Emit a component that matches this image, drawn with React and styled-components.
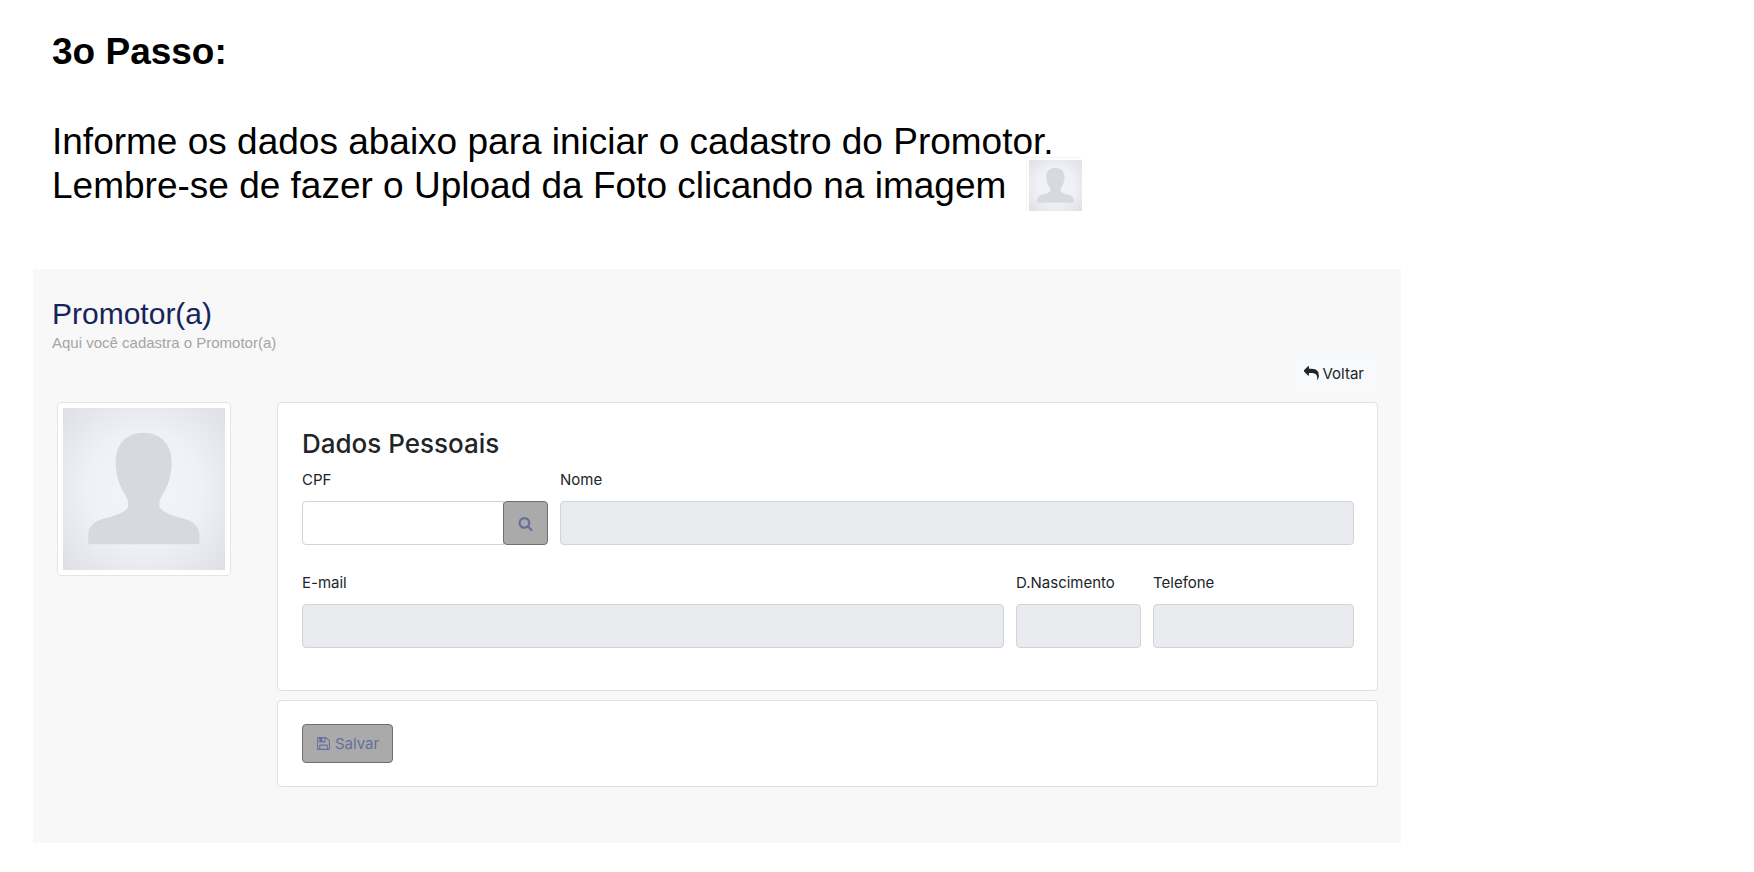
import React, { useId } from 'react';
import styled, { createGlobalStyle } from 'styled-components';

const GlobalStyle = createGlobalStyle`
  *, *::before, *::after { box-sizing: border-box; }
  body {
    margin: 0;
    background: #fff;
    color: #212529;
    font-family: Inter, "Liberation Sans", sans-serif;
    font-size: 15px;
  }
`;

const Page = styled.main`
  padding: 30px 353px 30px 33px;
`;

const Instructions = styled.section`
  padding-left: 19px;
  color: #000;
  font-family: "Liberation Sans", Arial, sans-serif;
  font-size: 37px;
  line-height: 44px;
`;

const StepTitle = styled.h1`
  margin: 0 0 46px;
  font-size: 37px;
  font-weight: 700;
`;

const Line = styled.p`
  display: flex;
  align-items: center;
  gap: 20px;
  height: 44px;
  margin: 0;
  white-space: nowrap;
`;

const InlinePhoto = styled.span`
  flex: none;
  width: 56px;
  height: 54px;
  margin-bottom: 4px;
  padding: 2px 0 0 2px;
  border: solid #f4f4f4;
  border-width: 1px 0 0 1px;
  background: #fff;
`;

const Panel = styled.section`
  margin-top: 61px;
  padding: 27px 23px 56px 19px;
  background: #f8f8f8;
`;

const PanelTitle = styled.h2`
  margin: 0;
  color: #152459;
  font: 400 30px/36px "Liberation Sans", Arial, sans-serif;
`;

const PanelSubtitle = styled.p`
  margin: 1px 0 0;
  color: #a6a4a4;
  font: 400 15px/20px "Liberation Sans", Arial, sans-serif;
`;

const Toolbar = styled.div`
  display: flex;
  justify-content: flex-end;
  margin-top: 1px;
`;

const Button = styled.button`
  display: inline-flex;
  align-items: center;
  justify-content: center;
  gap: 4px;
  height: 39px;
  padding: 0 13px;
  border: 1px solid ${(p) => (p.$muted ? '#6f6f6f' : '#f8f9fa')};
  border-radius: 4px;
  background: ${(p) => (p.$muted ? '#aaaaaa' : '#f8f9fa')};
  color: ${(p) => (p.$muted ? '#66709a' : '#212529')};
  font: inherit;
`;

const Columns = styled.div`
  display: grid;
  grid-template-columns: 174px minmax(0, 1fr);
  align-items: start;
  gap: 46px;
  margin-top: 9px;
  padding-left: 5px;
`;

const PhotoButton = styled.button`
  display: block;
  width: 174px;
  height: 174px;
  padding: 5px;
  border: 1px solid #e3e5e7;
  border-radius: 4px;
  background: #fff;
`;

const Form = styled.form`
  display: grid;
  gap: 9px;
`;

const Card = styled.div`
  padding: 23px 23px 23px 24px;
  border: 1px solid #e0e1e2;
  border-radius: 4px;
  background: #fff;
`;

const CardTitle = styled.h3`
  margin: 0 0 6px;
  font-size: 26px;
  font-weight: 500;
  line-height: 36px;
`;

const Row = styled.div`
  display: grid;
  grid-template-columns: ${(p) => p.$columns};
  gap: 12px;
  margin-bottom: ${(p) => p.$space}px;
`;

const Field = styled.div`
  display: flex;
  flex-direction: column;
  min-width: 0;
`;

const Label = styled.label`
  margin-bottom: 9px;
  font-size: 15px;
  line-height: 24px;
`;

const Input = styled.input`
  width: 100%;
  min-width: 0;
  height: 44px;
  flex: ${(p) => (p.$grouped ? '1' : 'none')};
  padding: 0 12px;
  border: 1px solid #ced4da;
  border-radius: ${(p) => (p.$grouped ? '4px 0 0 4px' : '4px')};
  background: #fff;
  color: inherit;
  font: inherit;

  &:disabled { background: #e9ebef; }
`;

const InputGroup = styled.div`
  display: flex;
`;

const SearchButton = styled(Button)`
  width: 45px;
  height: 44px;
  margin-left: -1px;
  padding: 0;
`;

const Glyph = styled.svg`
  flex: none;
  width: 15px;
  height: 15px;
  fill: currentColor;
`;

const Picture = styled.svg`
  display: block;
  width: 100%;
  height: 100%;
`;

function Avatar() {
  const id = useId();
  return (
    <Picture viewBox="0 0 489 489" preserveAspectRatio="none" aria-hidden="true">
      <defs>
        <radialGradient id={id} cx="50%" cy="50%" r="70%">
          <stop offset="0" stopColor="#f2f5fb" />
          <stop offset="0.5" stopColor="#eff1f7" />
          <stop offset="1" stopColor="#dfe0e6" />
        </radialGradient>
      </defs>
      <rect width="489" height="489" fill={`url(#${id})`} />
      <path
        fill="#d8d9de"
        d="M243 75C190 75 159 111 159 165C159 208 173 238 188 262C196 275 199 288 196 300C189 314 158 326 122 334C91 342 76 360 76 386V411H412V386C412 360 396 342 366 334C330 326 299 314 292 300C289 288 292 275 300 262C315 238 328 208 328 165C328 111 296 75 243 75Z"
      />
    </Picture>
  );
}

const glyphs = {
  reply:
    'M1792 1120q0 166-127 451-3 7-10.500 24t-13.500 30-13 22q-12 17-28 17-15 0-23.500-10t-8.500-25q0-9 2.500-26.500t2.500-23.500q5-68 5-123 0-112-19.500-200.500t-54-153.500-89.500-112-115.500-79-142.500-47.500-160.500-22.500-179-6h-224v256q0 26-19 45t-45 19-45-19l-512-512q-19-19-19-45t19-45l512-512q19-19 45-19t45 19 19 45v256h224q713 0 875 403 53 134 53 333z',
  search:
    'M1216 832q0-185-131.500-316.500t-316.500-131.500-316.500 131.500-131.500 316.500 131.500 316.500 316.500 131.500 316.500-131.500 131.500-316.500zm512 832q0 52-38 90t-90 38q-54 0-90-38l-343-342q-179 124-399 124-143 0-273.500-55.500t-225-150-150-225-55.500-273.500 55.500-273.500 150-225 225-150 273.500-55.500 273.500 55.500 225 150 150 225 55.500 273.500q0 220-124 399l343 343q37 37 37 90z',
  save:
    'M512 1536h768v-384h-768v384zm896 0h128v-896q0-14-10-38.500t-20-34.500l-281-281q-10-10-34-20t-39-10v416q0 40-28 68t-68 28h-576q-40 0-68-28t-28-68v-416h-128v1280h128v-416q0-40 28-68t68-28h832q40 0 68 28t28 68v416zm-384-928v-320q0-13-9.500-22.500t-22.500-9.500h-192q-13 0-22.500 9.500t-9.500 22.500v320q0 13 9.500 22.500t22.500 9.500h192q13 0 22.500-9.500t9.500-22.500zm640 32v928q0 40-28 68t-68 28h-1344q-40 0-68-28t-28-68v-1344q0-40 28-68t68-28h928q40 0 88 20t76 48l280 280q28 28 48 76t20 88z',
};

function Icon({ name }) {
  return (
    <Glyph viewBox="0 0 1792 1792" aria-hidden="true">
      <path d={glyphs[name]} />
    </Glyph>
  );
}

function TextField({ id, label, type = 'text' }) {
  return (
    <Field>
      <Label htmlFor={id}>{label}</Label>
      <Input id={id} type={type} disabled />
    </Field>
  );
}

export default function App() {
  return (
    <>
      <GlobalStyle />
      <Page>
        <Instructions>
          <StepTitle>3o Passo:</StepTitle>
          <Line>Informe os dados abaixo para iniciar o cadastro do Promotor.</Line>
          <Line>
            Lembre-se de fazer o Upload da Foto clicando na imagem
            <InlinePhoto>
              <Avatar />
            </InlinePhoto>
          </Line>
        </Instructions>

        <Panel>
          <PanelTitle>Promotor(a)</PanelTitle>
          <PanelSubtitle>Aqui você cadastra o Promotor(a)</PanelSubtitle>
          <Toolbar>
            <Button type="button">
              <Icon name="reply" />
              Voltar
            </Button>
          </Toolbar>
          <Columns>
            <PhotoButton type="button" aria-label="Foto">
              <Avatar />
            </PhotoButton>
            <Form onSubmit={(e) => e.preventDefault()}>
              <Card>
                <CardTitle>Dados Pessoais</CardTitle>
                <Row $columns="246px minmax(0, 1fr)" $space={26}>
                  <Field>
                    <Label htmlFor="cpf">CPF</Label>
                    <InputGroup>
                      <Input id="cpf" type="text" $grouped />
                      <SearchButton type="button" $muted aria-label="Buscar">
                        <Icon name="search" />
                      </SearchButton>
                    </InputGroup>
                  </Field>
                  <TextField id="nome" label="Nome" />
                </Row>
                <Row $columns="minmax(0, 1fr) 125px 201px" $space={19}>
                  <TextField id="email" label="E-mail" type="email" />
                  <TextField id="nascimento" label="D.Nascimento" />
                  <TextField id="telefone" label="Telefone" type="tel" />
                </Row>
              </Card>
              <Card>
                <Button type="submit" $muted>
                  <Icon name="save" />
                  Salvar
                </Button>
              </Card>
            </Form>
          </Columns>
        </Panel>
      </Page>
    </>
  );
}
